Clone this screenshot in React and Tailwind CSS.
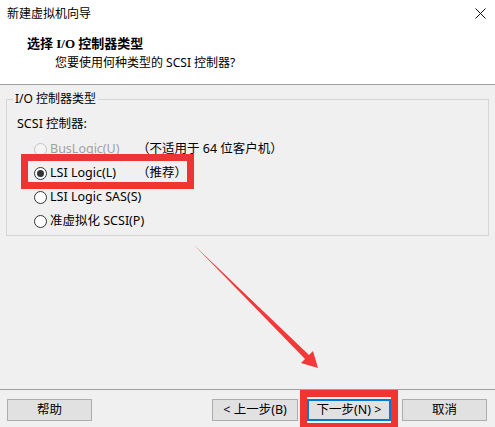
import React from 'react';

const ui = { fontFamily: '"Noto Sans", "Noto Sans CJK SC", sans-serif' };
const heading = { fontFamily: '"Liberation Serif", "Noto Sans CJK SC", serif' };

const Radio = ({ checked, disabled }) => (
  <span
    className={`w-[13px] h-[13px] rounded-full border flex items-center justify-center shrink-0 ${
      disabled ? 'border-[#c4c4c4] bg-[#f4f4f4]' : 'border-[#333333] bg-white'
    }`}
  >
    {checked && <span className="w-[7px] h-[7px] rounded-full bg-[#333333]" />}
  </span>
);

const Option = ({ label, note, checked, disabled }) => (
  <div className="h-[24px] flex items-center pl-[17px] text-[12.5px] whitespace-nowrap">
    <Radio checked={checked} disabled={disabled} />
    <span className={`ml-[3px] min-w-[87px] ${disabled ? 'text-[#a0a0a0]' : 'text-black'}`}>{label}</span>
    {note && <span className="text-black">{note}</span>}
  </div>
);

const Button = ({ children, width, primary }) => (
  <button
    className={`h-[22px] ${width} flex items-center justify-center text-[12.5px] text-black bg-[#e1e1e1] whitespace-nowrap ${
      primary ? 'border-2 border-[#0078d7]' : 'border border-[#adadad]'
    }`}
  >
    {children}
  </button>
);

const App = () => {
  return (
    <div className="relative w-[495px] h-[427px] bg-[#f0f0f0] flex flex-col text-[12px] overflow-hidden" style={ui}>
      {/* header */}
      <div className="h-[85px] bg-white border-b border-[#a0a0a0] shrink-0">
        <div className="h-[27px] flex items-center justify-between pl-[7px] pr-[9px]">
          <span>新建虚拟机向导</span>
          <svg width="11" height="11" viewBox="0 0 11 11">
            <path d="M0.5 0.5 L10.5 10.5 M10.5 0.5 L0.5 10.5" stroke="#111" strokeWidth="1" />
          </svg>
        </div>
        <div className="pl-[27px] pt-[8px] text-[13px] font-bold leading-[18px]" style={heading}>
          选择 I/O 控制器类型
        </div>
        <div className="pl-[55px] pt-[2px] leading-[16px]">您要使用何种类型的 SCSI 控制器?</div>
      </div>

      {/* group box */}
      <fieldset className="mx-[6px] mt-[6px] border border-[#d5d5d5] pl-[10px] pt-[5px] pb-[2px]">
        <legend className="px-[2px] -ml-[4px] leading-[16px]">I/O 控制器类型</legend>
        <div className="h-[25px] flex items-center text-[12.5px]">SCSI 控制器:</div>
        <Option label="BusLogic(U)" note="（不适用于 64 位客户机）" disabled />
        <Option label="LSI Logic(L)" note="（推荐）" checked />
        <Option label="LSI Logic SAS(S)" />
        <Option label="准虚拟化 SCSI(P)" />
      </fieldset>

      <div className="flex-1" />

      {/* footer */}
      <div className="border-t border-[#a0a0a0] pt-[9px] pb-[6px] pl-[7px] pr-[8px] flex items-center">
        <Button width="w-[85px]">帮助</Button>
        <div className="flex-1" />
        <Button width="w-[86px]">&lt; 上一步(B)</Button>
        <div className="w-[9px]" />
        <Button width="w-[84px]" primary>下一步(N) &gt;</Button>
        <div className="w-[11px]" />
        <Button width="w-[85px]">取消</Button>
      </div>

      {/* annotations */}
      <div className="absolute left-[21px] top-[154px] w-[173px] h-[35px] border-[7px] border-[#ef3434] pointer-events-none" />
      <div className="absolute left-[300px] top-[390px] w-[98px] h-[40px] border-[7px] border-[#ef3434] pointer-events-none" />
      <svg className="absolute left-0 top-0 pointer-events-none" width="495" height="427">
        <polygon points="194,245 309,355 313,351 318,368 301,363 305,359" fill="#f03a3a" />
      </svg>
    </div>
  );
};

export default App;
